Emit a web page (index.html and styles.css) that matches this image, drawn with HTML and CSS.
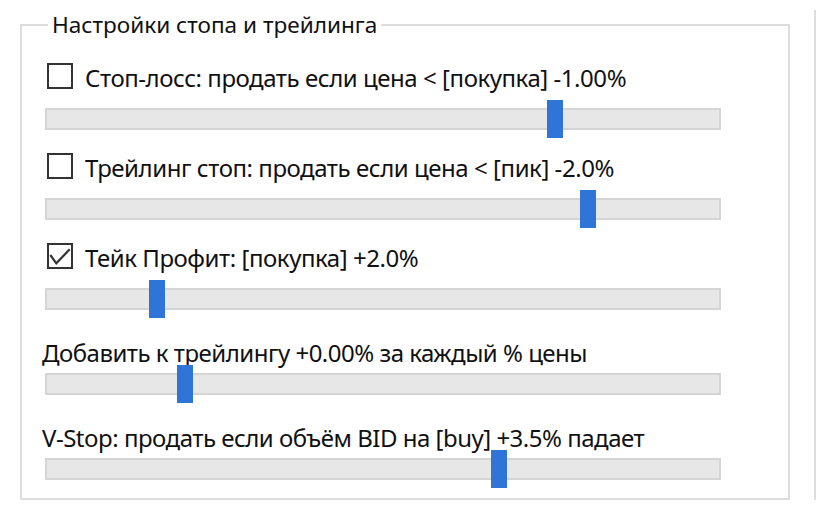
FILE: index.html
```html
<!DOCTYPE html>
<html lang="ru">
<head>
<meta charset="utf-8">
<title>Настройки стопа и трейлинга</title>
<link rel="stylesheet" href="styles.css">
</head>
<body>
<div class="page">
  <fieldset class="group">
    <legend class="group-title">Настройки стопа и трейлинга</legend>

    <div class="setting">
      <div class="check-row">
        <span class="box"></span>
        <span class="label">Стоп-лосс: продать если цена &lt; [покупка] -1.00%</span>
      </div>
      <div class="slider"><div class="track"></div><div class="thumb" style="left:502px"></div></div>
    </div>

    <div class="setting">
      <div class="check-row">
        <span class="box"></span>
        <span class="label">Трейлинг стоп: продать если цена &lt; [пик] -2.0%</span>
      </div>
      <div class="slider"><div class="track"></div><div class="thumb" style="left:535px"></div></div>
    </div>

    <div class="setting">
      <div class="check-row">
        <span class="box checked"><svg class="tick" viewBox="0 0 22 22" width="22" height="22"><polyline points="1.3,10 7.3,18.3 20.7,4.3" fill="none" stroke="#333" stroke-width="2.2"/></svg></span>
        <span class="label">Тейк Профит: [покупка] +2.0%</span>
      </div>
      <div class="slider"><div class="track"></div><div class="thumb" style="left:104px"></div></div>
    </div>

    <div class="setting plain">
      <div class="text-row">Добавить к трейлингу +0.00% за каждый % цены</div>
      <div class="slider"><div class="track"></div><div class="thumb" style="left:132px"></div></div>
    </div>

    <div class="setting plain">
      <div class="text-row">V-Stop: продать если объём BID на [buy] +3.5% падает</div>
      <div class="slider"><div class="track"></div><div class="thumb" style="left:446px"></div></div>
    </div>
  </fieldset>
  <fieldset class="group group-side"></fieldset>
</div>
</body>
</html>
```
FILE: styles.css
```css
html, body {
  margin: 0;
  padding: 0;
  background: #ffffff;
  overflow: hidden;
  height: 100%;
}

body {
  font-family: "Noto Sans", "Open Sans", sans-serif;
  color: #111111;
}

.page {
  display: flex;
  gap: 24px;
  padding: 10px 0 0 20px;
  align-items: flex-start;
}

.group {
  margin: 0;
  padding: 0 0 10px 23px;
  border: 2px solid #dcdcdc;
  width: 770px;
  box-sizing: border-box;
  min-width: 0;
  flex: none;
}

.group-side {
  width: 2px;
  height: 490px;
  padding: 0;
  border-right: none;
}

.group-title {
  margin-left: 3px;
  padding: 0 4px;
  font-size: 22.6px;
  line-height: 30px;
}

.setting {
  margin-top: 12px;
}

.setting:first-of-type {
  margin-top: 20px;
}

.setting.plain {
  margin-top: 22px;
}

.check-row {
  display: flex;
  align-items: center;
  height: 32px;
  gap: 12px;
  font-size: 24px;
  line-height: 32px;
  letter-spacing: -0.45px;
  white-space: nowrap;
}

.label {
  padding-top: 4px;
}

.box {
  flex: none;
  width: 26px;
  height: 26px;
  box-sizing: border-box;
  border: 2px solid #333333;
  margin-left: 2px;
}

.tick {
  display: block;
}

.text-row {
  height: 25px;
  font-size: 24px;
  line-height: 25px;
  letter-spacing: -0.5px;
  margin-left: -3px;
  white-space: nowrap;
}

.slider {
  position: relative;
  width: 676px;
  height: 38px;
  box-sizing: border-box;
  padding-top: 8px;
  margin-top: 8px;
}

.plain .slider {
  margin-top: 0;
}

.track {
  height: 22px;
  box-sizing: border-box;
  border: 2px solid #d5d5d5;
  background: #e7e7e8;
}

.thumb {
  position: absolute;
  top: 0;
  width: 16px;
  height: 38px;
  background: #2f74d7;
}
```
